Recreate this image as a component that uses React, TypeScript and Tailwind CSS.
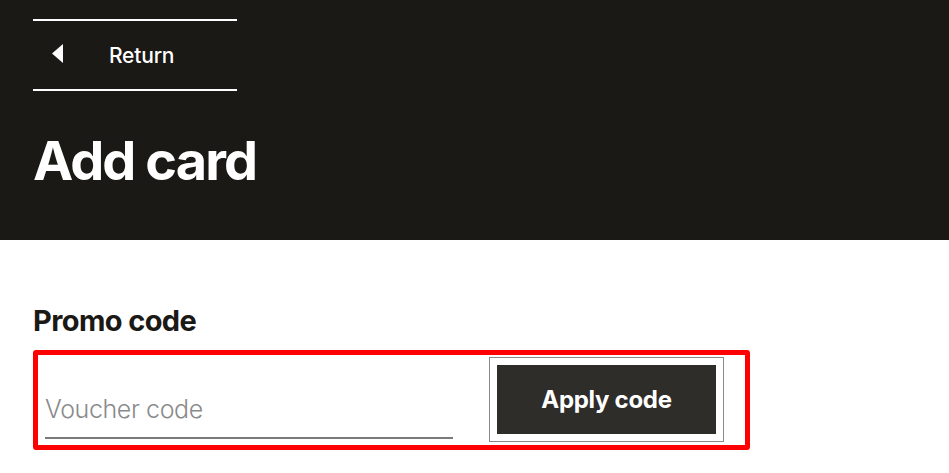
// Seite "Add card" mit Promo-Code-Feld

export default function App() {
  return (
    <div className="w-[949px] h-[473px] bg-white overflow-hidden font-['Inter',sans-serif]">
      {/* Kopfbereich */}
      <header className="h-[240px] bg-[#1b1916] pl-[33px] pt-[19px]">
        <a
          href="#"
          className="flex items-center w-[204px] h-[72px] border-y-2 border-white text-white"
        >
          <svg width="12" height="20" viewBox="0 0 12 20" className="ml-[19px] mb-[2px]">
            <polygon points="11,0 11,19 0,9.5" fill="white" />
          </svg>
          <span className="ml-[45px] text-[21px] leading-none font-medium tracking-[-0.2px]">Return</span>
        </a>
        <h1 className="mt-[43px] text-[54px] leading-none font-bold text-white tracking-[-1.9px]">Add card</h1>
      </header>

      {/* Promo-Code */}
      <section className="pl-[33px] pt-[66px]">
        <h2 className="text-[29px] leading-none font-bold text-[#1b1916] tracking-[-0.6px]">Promo code</h2>
        <div className="mt-[15px] w-[717px] h-[100px] border-[5px] border-[#ff0000] rounded-[3px] flex items-start pl-[7px]">
          <div className="w-[408px] mt-[34px] border-b-2 border-[#7a7a7a]">
            <input
              placeholder="Voucher code"
              className="w-full h-[48px] pb-[9px] text-[25px] text-[#1b1916] placeholder:text-[#8a8a8a] outline-none font-light tracking-[-0.4px]"
            />
          </div>
          <div className="ml-[36px] mt-[2px] border border-[#8a8a8a] p-[7px]">
            <button className="w-[219px] h-[69px] bg-[#2f2d2a] text-white text-[24px] font-bold tracking-[-0.3px]">
              Apply code
            </button>
          </div>
        </div>
      </section>
    </div>
  );
}
